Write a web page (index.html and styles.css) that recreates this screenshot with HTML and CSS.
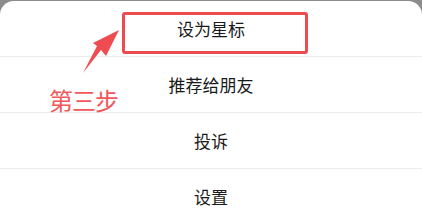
FILE: index.html
```html
<!DOCTYPE html>
<html lang="zh-CN">
<head>
    <meta charset="UTF-8">
    <title>操作菜单</title>
    <link rel="stylesheet" href="styles.css">
</head>
<body>
    <div class="sheet">
        <div class="item">设为星标</div>
        <div class="item">推荐给朋友</div>
        <div class="item">投诉</div>
        <div class="item">设置</div>

        <!-- annotation -->
        <div class="mark-box"></div>
        <svg class="mark-arrow" width="422" height="224" viewBox="0 0 422 224">
            <polygon points="119,30 106,56 101,50 83,73 97,46 93,43" fill="#ee4c51"/>
        </svg>
        <div class="mark-label">第三步</div>
    </div>
</body>
</html>
```

FILE: styles.css
```css
* {
    margin: 0;
    padding: 0;
    box-sizing: border-box;
}

body {
    background: #8c8c8c;
    width: 422px;
    height: 224px;
    overflow: hidden;
    font-family: "Noto Sans CJK SC", sans-serif;
}

.sheet {
    position: relative;
    margin-top: 1px;
    background: #fff;
    border-radius: 14px 14px 0 0;
    height: 223px;
}

.item {
    height: 56px;
    border-bottom: 1px solid #ececec;
    display: flex;
    align-items: center;
    justify-content: center;
    font-size: 17px;
    color: #1a1a1a;
}

.mark-box {
    position: absolute;
    left: 122px;
    top: 11px;
    width: 186px;
    height: 42px;
    border: 3px solid #ec4b50;
    border-radius: 3px;
}

.mark-arrow {
    position: absolute;
    left: 0;
    top: -1px;
}

.mark-label {
    position: absolute;
    left: 49px;
    top: 81px;
    font-size: 24px;
    color: #f0585c;
    letter-spacing: -1px;
}
```
